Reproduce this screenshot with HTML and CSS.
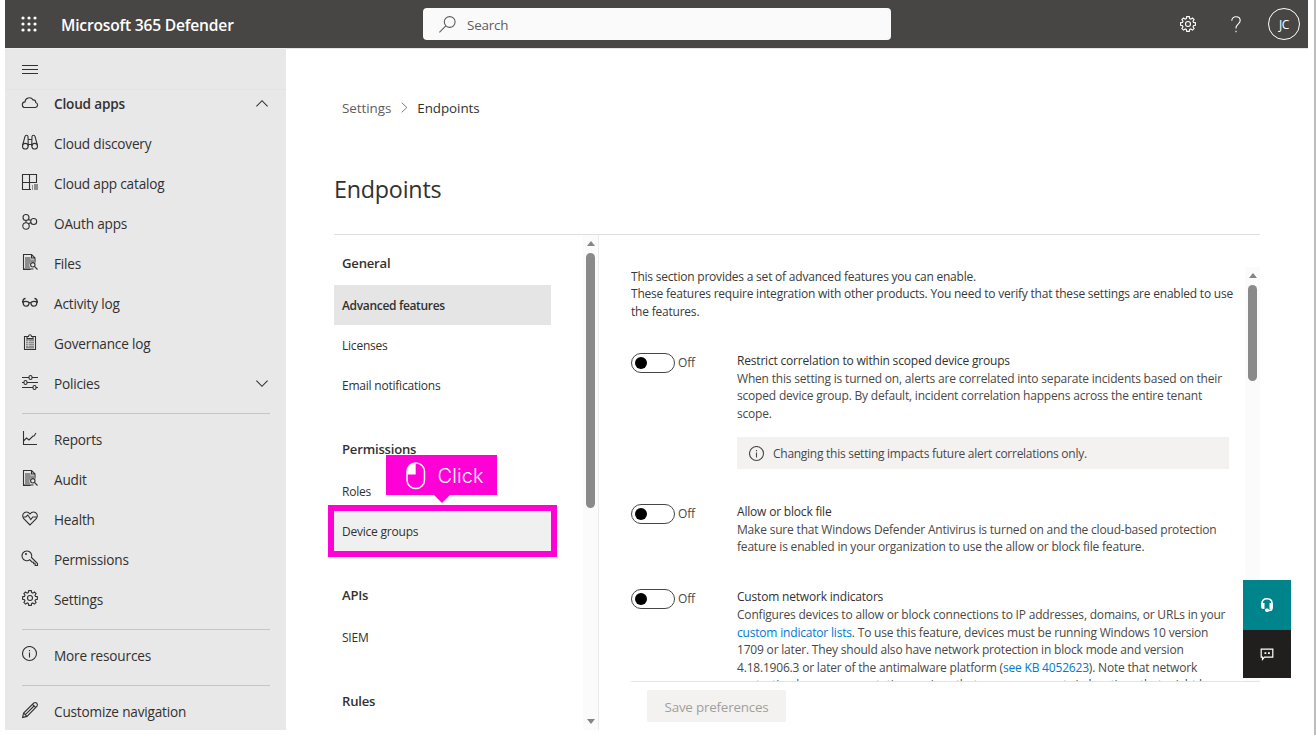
FILE: index.html
```html
<!DOCTYPE html>
<html lang="en">
<head>
<meta charset="utf-8">
<title>Endpoints - Microsoft 365 Defender</title>
<link rel="stylesheet" href="styles.css">
</head>
<body>
<svg class="defs" aria-hidden="true">
  <symbol id="gear" viewBox="0 0 16 16"><path d="M6.7.6h2.6l.4 2 1.1.5L12.500 2l1.600 1.600-1.100 1.700.5 1.100 1.900.4v2.500l-1.900.4-.5 1.100 1.100 1.700-1.600 1.600-1.700-1.100-1.100.5-.4 1.900H6.700l-.4-1.900-1.100-.5-1.700 1.100-1.600-1.600 1.100-1.700-.5-1.100-1.900-.4V6.800l1.900-.4.5-1.100-1.100-1.700L3.500 2l1.700 1.100 1.100-.5z"/><circle cx="8" cy="8" r="2.500"/></symbol>
  <symbol id="filesearch" viewBox="0 0 16 16"><path class="grey" d="M3 3h5.500v2.500H12V8H9L7.500 10v2.500l1 1.500H3z"/><path class="bar" d="M1.500 15h10"/><path d="M8.500 15.500H1.500V.5h8l3.500 3.500v4.500M9.500.5V4H13"/><circle cx="10.800" cy="10.800" r="2.200"/><path d="M12.400 12.400l3.100 3.100"/></symbol>
  <symbol id="info" viewBox="0 0 16 16"><circle cx="7.500" cy="7.500" r="7"/><path d="M7.500 6.500v5M7.500 4v1.200"/></symbol>
</svg>
<div class="app">
  <header class="top">
    <svg class="waffle" width="16" height="16" viewBox="0 0 16 16"><circle cx="2" cy="2" r="1.600"/><circle cx="8" cy="2" r="1.600"/><circle cx="14" cy="2" r="1.600"/><circle cx="2" cy="8" r="1.600"/><circle cx="8" cy="8" r="1.600"/><circle cx="14" cy="8" r="1.600"/><circle cx="2" cy="14" r="1.600"/><circle cx="8" cy="14" r="1.600"/><circle cx="14" cy="14" r="1.600"/></svg>
    <div class="brand">Microsoft 365 Defender</div>
    <div class="search"><svg class="ico" width="17" height="17" viewBox="0 0 17 17"><circle cx="10.700" cy="6" r="5.400"/><path d="M6.800 9.900L.4 16.300"/></svg><span>Search</span></div>
    <div class="tools">
      <svg class="ico" width="16" height="16"><use href="#gear"/></svg>
      <svg class="ico help" width="10" height="17" viewBox="0 0 10 17"><path d="M.8 4.800C.8 2.200 2.500.7 5 .7s4.200 1.500 4.200 3.900c0 3.400-4.200 3.600-4.200 7.200v.7M5 14.800v1.400"/></svg>
      <div class="avatar">JC</div>
    </div>
  </header>
  <div class="body">
    <nav class="side">
      <div class="burger"><svg width="16" height="9" viewBox="0 0 16 9"><path d="M0 .5h16M0 4.500h16M0 8.500h16"/></svg></div>
      <div class="items">
        <a class="item open"><svg class="ico" width="16" height="16" viewBox="0 0 16 16"><path d="M3.300 13.500a2.800 2.800 0 0 1-.3-5.600 4.300 4.300 0 0 1 8-2c1.600-.3 2.900 1 2.700 2.600a2.550 2.550 0 0 1-.4 5z"/></svg><span>Cloud apps</span><svg class="ico chev" width="12" height="7" viewBox="0 0 12 7"><path d="M.4 6.300L6 .7l5.600 5.600"/></svg></a>
        <a class="item"><svg class="ico" width="16" height="16" viewBox="0 0 16 16"><circle cx="3.300" cy="12.200" r="2.800"/><circle cx="12.700" cy="12.200" r="2.800"/><path d="M.7 11L3 2.500C3.300.8 5.800.8 6 2.500l.3 9.700M15.300 11L13 2.500C12.700.8 10.200.8 10 2.500l-.3 9.700M6.200 5.500h3.600M6.200 10.500h3.600"/></svg><span>Cloud discovery</span></a>
        <a class="item"><svg class="ico" width="16" height="16" viewBox="0 0 16 16"><path d="M9 15.500H.5V.5h14v8H.5M7.500.5v15"/><path class="grey" d="M10 11h1v5h-1zM12 10h4v6h-4z"/></svg><span>Cloud app catalog</span></a>
        <a class="item"><svg class="ico" width="16" height="16" viewBox="0 0 16 16"><circle cx="4" cy="3.500" r="3"/><circle cx="11.700" cy="7.500" r="3"/><circle cx="4" cy="12" r="3.200"/><path d="M6.500 5.500l2.400 1M6.200 9.800l2.900-1.400M4 6.500v2.300"/></svg><span>OAuth apps</span></a>
        <a class="item"><svg class="ico" width="16" height="16"><use href="#filesearch"/></svg><span>Files</span></a>
        <a class="item"><svg class="ico heavy" width="16" height="16" viewBox="0 0 16 16"><path d="M3.500 4.500C2 4.500 1 5.500.8 7.500M12.500 4.500c1.500 0 2.500 1 2.700 3M0 8h1M15 8h1M7 9.300c.4-.8 1.600-.8 2 0M1.200 8C2 7.200 5.500 7.200 6.500 8c.8.7.6 1.800.2 2.600-.5 1-1.400 1.600-2.500 1.600C2 12.200 1 10.500 1.200 8zM14.800 8c-.8-.8-4.300-.8-5.300 0-.8.7-.6 1.800-.2 2.600.5 1 1.400 1.600 2.500 1.600 2.200 0 3.200-1.700 3-4.200z"/></svg><span>Activity log</span></a>
        <a class="item"><svg class="ico" width="16" height="16" viewBox="0 0 16 16"><path class="grey" d="M4 5h8v9.500H4z"/><path d="M5 2.500H2.500v13h11v-13H11M5 4.500v-2h1.500c.2-2.400 2.800-2.400 3 0H11v2z"/><path class="lines" d="M4 7.500h8M4 9.500h8M4 11.500h8M6.500 6v7"/></svg><span>Governance log</span></a>
        <a class="item"><svg class="ico" width="16" height="16" viewBox="0 0 16 16"><path d="M0 3.500h7M10 3.500h6M0 8.500h2M5 8.500h11M0 13.500h11M14 13.500h2"/><rect x="7" y="1.500" width="3" height="4" rx="1.500"/><rect x="2" y="6.500" width="3" height="4" rx="1.500"/><rect x="11" y="11.500" width="3" height="4" rx="1.500"/></svg><span>Policies</span><svg class="ico chev" width="12" height="7" viewBox="0 0 12 7"><path d="M.4.7L6 6.300 11.600.7"/></svg></a>
        <hr>
        <a class="item"><svg class="ico" width="16" height="16" viewBox="0 0 16 16"><path d="M1.500 1v13.500H15M1.500 11l3-3 2.500 2 4-4h1l2-3"/></svg><span>Reports</span></a>
        <a class="item"><svg class="ico" width="16" height="16"><use href="#filesearch"/></svg><span>Audit</span></a>
        <a class="item"><svg class="ico" width="16" height="16" viewBox="0 0 16 16"><path d="M8 15L1.500 8.500C-1 5 2 2 4.500 2 6.300 2 7.300 3 8 4c.7-1 1.700-2 3.500-2C14 2 17 5 14.500 8.500zM.8 7h3l2-2 3 4.500 2-2.500H15.200"/></svg><span>Health</span></a>
        <a class="item"><svg class="ico" width="16" height="16" viewBox="0 0 16 16"><path d="M9.500 7.500l6 6v2h-2.300v-1.700h-1.500v-1.600h-1.500L7.800 9.800A4.900 4.900 0 1 1 9.500 7.500z"/><circle cx="4" cy="4" r=".5"/></svg><span>Permissions</span></a>
        <a class="item"><svg class="ico" width="16" height="16"><use href="#gear"/></svg><span>Settings</span></a>
        <hr>
        <a class="item"><svg class="ico" width="16" height="16"><use href="#info"/></svg><span>More resources</span></a>
        <hr>
        <a class="item"><svg class="ico" width="16" height="16" viewBox="0 0 16 16"><path d="M.6 15.400l1-4.400L11.800 1c2.200-1.400 4.500 1 3.200 3.200L5 14.400zM1.600 11L5 14.400M10.500 2.300l3.300 3.300M12.600 3.500L3.300 12.700"/></svg><span>Customize navigation</span></a>
      </div>
    </nav>
    <main class="main">
      <div class="crumbs"><span>Settings</span><svg class="ico" width="7" height="11" viewBox="0 0 7 11"><path d="M.7.7l5.200 4.800-5.200 4.800"/></svg><b>Endpoints</b></div>
      <h1>Endpoints</h1>
      <div class="panes">
        <div class="menu">
          <h2>General</h2>
          <a class="sel">Advanced features</a>
          <a>Licenses</a>
          <a>Email notifications</a>
          <h2>Permissions</h2>
          <a>Roles</a>
          <a class="target">Device groups
            <span class="tip"><svg width="20" height="28" viewBox="0 0 20 28"><rect x="1" y="1" width="17.500" height="25.500" rx="8.500"/><path d="M9.700 1v11.500H1v-3C1 4.500 4.500 1 9.700 1z"/></svg>Click</span>
          </a>
          <h2>APIs</h2>
          <a>SIEM</a>
          <h2>Rules</h2>
        </div>
        <div class="track"><i class="up"></i><i class="thumb"></i><i class="down"></i></div>
        <section class="detail">
          <div class="scroll">
            <div class="content">
              <p class="intro">This section provides a set of advanced features you can enable.<br>These features require integration with other products. You need to verify that these settings are enabled to use<br>the features.</p>
              <div class="row first">
                <div class="switch"><i></i>Off</div>
                <div class="text"><strong>Restrict correlation to within scoped device groups</strong>When this setting is turned on, alerts are correlated into separate incidents based on their<br>scoped device group. By default, incident correlation happens across the entire tenant<br>scope.
                  <div class="note"><svg class="ico" width="16" height="16"><use href="#info"/></svg>Changing this setting impacts future alert correlations only.</div>
                </div>
              </div>
              <div class="row">
                <div class="switch"><i></i>Off</div>
                <div class="text"><strong>Allow or block file</strong>Make sure that Windows Defender Antivirus is turned on and the cloud-based protection<br>feature is enabled in your organization to use the allow or block file feature.</div>
              </div>
              <div class="row">
                <div class="switch"><i></i>Off</div>
                <div class="text"><strong>Custom network indicators</strong>Configures devices to allow or block connections to IP addresses, domains, or URLs in your<br><a>custom indicator lists</a>. To use this feature, devices must be running Windows 10 version<br>1709 or later. They should also have network protection in block mode and version<br>4.18.1906.3 or later of the antimalware platform (<a>see KB 4052623</a>). Note that network<br>protection leverages reputation engines that process requests in locations that might be</div>
              </div>
            </div>
            <div class="track"><i class="up"></i><i class="thumb short"></i></div>
          </div>
          <div class="foot"><button disabled>Save preferences</button></div>
        </section>
      </div>
    </main>
  </div>
  <div class="float">
    <div class="support"><svg width="14" height="16" viewBox="0 0 14 16"><path class="band" d="M2 9V6.500C2 3.500 4 1.700 7 1.700s5 1.800 5 4.800V11c0 1.500-1 2.500-3 2.500"/><path class="pads" d="M1.200 6H4.500v6H3C1.800 12 1.200 11 1.200 10zM12.800 6H9.500v6H11c1.200 0 1.800-1 1.800-2zM5 13c0-1 1-1.500 2-1.500s2.200.5 2.200 1.700S8.200 15 7 15s-2-.8-2-2z"/></svg></div>
    <div class="chat"><svg width="14" height="13" viewBox="0 0 14 13"><path class="band thin" d="M1.200 1.200h11.600v8H4.500l-2 2.300V9.200H1.200z"/><path class="pads" d="M4.500 4.300h1.800v1.800H4.500zM8 4.300h1.800v1.800H8z"/></svg></div>
  </div>
</div>
</body>
</html>
```
FILE: styles.css
```css
* { box-sizing: border-box; }
body { margin: 0; width: 1316px; height: 735px; overflow: hidden; background: #fff; color: #323130; font-family: "Open Sans", "Noto Sans", sans-serif; border-right: 2px solid #bbb; }
.defs { position: absolute; width: 0; height: 0; }
svg { flex: none; display: block; overflow: visible; }
.ico { fill: none; stroke: currentColor; stroke-width: 1.1; }
.heavy { stroke-width: 1.3; }
.grey { fill: #8d8d8d; stroke: none; }
.bar { stroke: #8d8d8d; stroke-width: 2; }
.lines { stroke: #e8e8e8; stroke-width: .5; }
.app { position: relative; width: 1303px; height: 730px; margin-left: 5px; display: flex; flex-direction: column; overflow: hidden; }

.top { flex: none; height: 48px; background: #484644; color: #fff; display: flex; align-items: center; padding-left: 16px; }
.waffle { fill: #fff; }
.brand { width: 361.5px; margin-left: 24px; padding-top: 2px; font-size: 15.6px; font-weight: 600; letter-spacing: -.19px; }
.search { width: 468px; height: 32px; border-radius: 4px; background: #fafafa; color: #605e5c; display: flex; align-items: center; gap: 11.5px; padding-left: 16px; font-size: 13.4px; letter-spacing: -.2px; }
.search span { padding-top: 2px; }
.tools { flex: 1; display: flex; align-items: center; justify-content: flex-end; padding-right: 8px; }
.help { margin: 0 27.5px 0 34.5px; }
.avatar { width: 32px; height: 32px; border: 1px solid #fff; border-radius: 50%; font-size: 12px; line-height: 32px; text-align: center; letter-spacing: -.3px; }

.body { flex: 1; min-height: 0; display: flex; }
.side { width: 281px; background: #e8e8e8; box-shadow: inset 0 1px #efefef; }
.burger { height: 42px; padding: 17px 17px 0; border-bottom: 1px solid #e3e3e3; }
.burger path { stroke: #323130; }
.items { margin-top: -7px; padding: 0 16px 0 17px; }
.item { height: 40px; display: flex; align-items: center; gap: 16px; font-size: 13.6px; letter-spacing: -.18px; }
.item > span { flex: 1; }
.item > .ico { margin-top: -2px; }
.item > .chev { margin: 0 2px 0 0; }
.open { font-weight: 600; }
.side hr { height: 1px; margin: 10px 0 5px; border: 0; background: #c8c6c4; }

.main { flex: 1; padding: 48px 48px 0; display: flex; flex-direction: column; box-shadow: inset 0 1px #e6e6e6; }
.crumbs { height: 23px; display: flex; align-items: center; padding-left: 8px; font-size: 13.4px; letter-spacing: -.05px; color: #605e5c; }
.crumbs svg { margin: 0 9px 0 10px; stroke-width: .8; }
.crumbs b { font-weight: 400; color: #323130; }
h1 { margin: 54px 0 0; height: 32px; font-size: 23.3px; line-height: 33px; font-weight: 400; letter-spacing: -.22px; }
.panes { flex: 1; min-height: 0; width: 926px; margin-top: 29px; border-top: 1px solid #e1dfdd; display: flex; }
.menu { width: 249px; padding-top: 8px; display: flex; flex-direction: column; }
.menu h2 { flex: none; margin: 24px 0 0; padding-left: 8px; height: 42px; font-size: 13.1px; line-height: 41px; font-weight: 600; letter-spacing: -.2px; }
.menu h2:first-child { margin: 0; }
.menu a { flex: none; width: 217px; height: 40px; padding-left: 8px; font-size: 12px; line-height: 41px; letter-spacing: -.22px; }
.menu .sel { background: #e5e5e5; font-weight: 600; letter-spacing: -.33px; }
.menu .target { position: relative; background: #f0f0f0; outline: 6px solid #ff00d7; }
.tip { position: absolute; left: 52px; top: -56px; width: 111px; height: 40px; padding-left: 20px; background: #ff00d7; color: #fff; display: flex; align-items: center; gap: 11.5px; font: 300 20px/40px Inter, sans-serif; letter-spacing: .1px; padding-top: 1px; }
.tip::after { content: ""; position: absolute; left: 47px; top: 39px; border: 9.500px solid transparent; border-top-color: #ff00d7; border-bottom: 0; }
.tip rect { fill: none; stroke: #fff; stroke-width: 1.500; }
.tip path { fill: #fff; }
.track { flex: none; width: 15px; background: #fbfbfb; display: flex; flex-direction: column; align-items: center; }
.track .up, .track .down { border: 4.500px solid transparent; border-top: 0; border-bottom: 5px solid #858585; margin: 6px 0 7px; }
.track .down { border-bottom: 0; border-top: 5px solid #858585; margin: auto 0 6px; }
.thumb { width: 9px; height: 255px; border-radius: 5px; background: #8a8a8a; }
.short { height: 96px; }

.detail { flex: 1; border-left: 1px solid #edebe9; padding: 32px 0 0 32px; display: flex; flex-direction: column; min-width: 0; }
.scroll { height: 414px; display: flex; overflow: hidden; }
.content { flex: 1; min-width: 0; white-space: nowrap; font-size: 12px; line-height: 17.540px; letter-spacing: -.19px; color: #4a4846; }
.intro { margin: 0 0 31.3px; padding-top: .7px; letter-spacing: -.213px; color: #3b3a39; }
.row { display: flex; height: 85.6px; }
.first { height: 151px; }
.switch { width: 106px; height: 20px; margin-top: 1px; display: flex; align-items: center; gap: 3px; }
.switch i { width: 44px; height: 20px; border: 1px solid #484644; border-radius: 10px; padding: 3px; }
.switch i::before { content: ""; display: block; width: 12px; height: 12px; border-radius: 50%; background: #000; }
.text strong { display: block; font-weight: 400; line-height: 18px; color: #323130; }
.text a { color: #0078d4; }
.note { width: 492px; height: 32px; margin-top: 15px; background: #f3f2f1; display: flex; align-items: center; gap: 8px; padding-left: 12px; letter-spacing: -.27px; padding-top: 1px; }
.foot { border-top: 1px solid #e6e4e2; padding: 8px 16px; }
.foot button { width: 139px; height: 32px; padding: 1px 0 0; border: 0; border-radius: 2px; background: #f3f2f1; color: #a19f9d; font: 13.400px "Open Sans", sans-serif; letter-spacing: -.2px; display: block; }

.float { position: absolute; left: 1238px; top: 580px; width: 48px; }
.float > div { display: flex; align-items: center; justify-content: center; }
.support { height: 50px; background: #00848c; }
.chat { height: 48px; background: #201f1e; }
.band { fill: none; stroke: #fff; stroke-width: 1.600; }
.thin { stroke-width: 1.200; }
.pads { fill: #fff; }
```
